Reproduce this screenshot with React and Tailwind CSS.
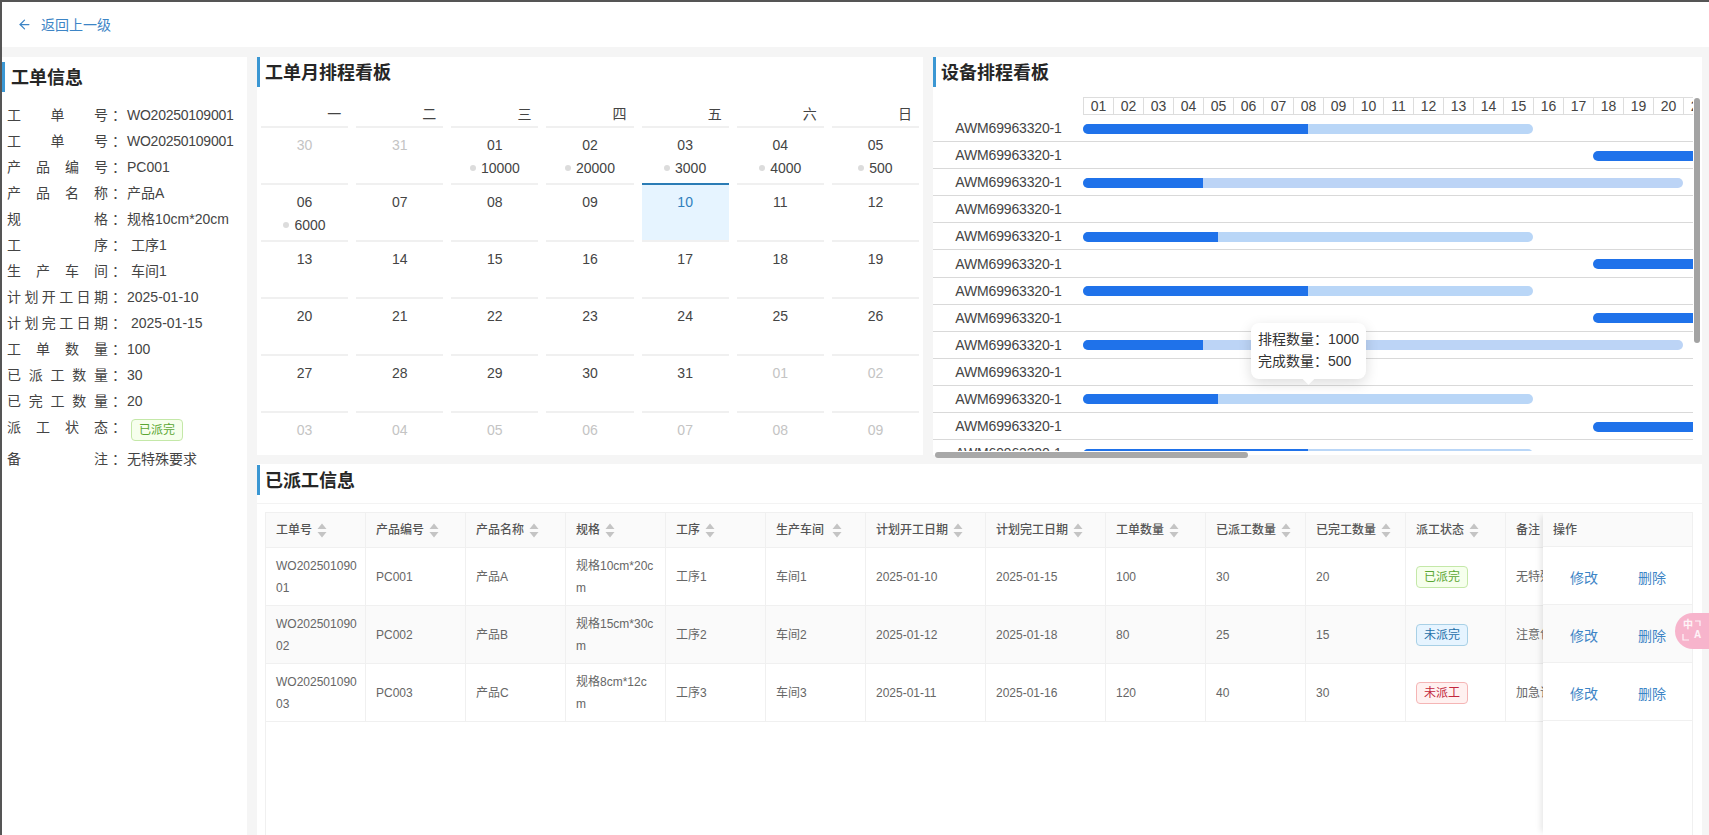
import React from 'react';
import { ArrowLeft } from 'lucide-react';

const FONT = "font-['Liberation_Sans','Noto_Sans_CJK_SC',sans-serif]";

const infoRows = [
  { label: '工单号', value: 'WO20250109001', tight: true },
  { label: '工单号', value: 'WO20250109001', tight: true },
  { label: '产品编号', value: 'PC001' },
  { label: '产品名称', value: '产品A' },
  { label: '规格', value: '规格10cm*20cm' },
  { label: '工序', value: '工序1', extra: true },
  { label: '生产车间', value: '车间1', extra: true },
  { label: '计划开工日期', value: '2025-01-10' },
  { label: '计划完工日期', value: '2025-01-15', extra: true },
  { label: '工单数量', value: '100' },
  { label: '已派工数量', value: '30' },
  { label: '已完工数量', value: '20' },
];

const weekdays = ['一', '二', '三', '四', '五', '六', '日'];

const calendar = [
  { d: '30', dim: true }, { d: '31', dim: true }, { d: '01', n: '10000' }, { d: '02', n: '20000' }, { d: '03', n: '3000' }, { d: '04', n: '4000' }, { d: '05', n: '500' },
  { d: '06', n: '6000' }, { d: '07' }, { d: '08' }, { d: '09' }, { d: '10', today: true }, { d: '11' }, { d: '12' },
  { d: '13' }, { d: '14' }, { d: '15' }, { d: '16' }, { d: '17' }, { d: '18' }, { d: '19' },
  { d: '20' }, { d: '21' }, { d: '22' }, { d: '23' }, { d: '24' }, { d: '25' }, { d: '26' },
  { d: '27' }, { d: '28' }, { d: '29' }, { d: '30' }, { d: '31' }, { d: '01', dim: true }, { d: '02', dim: true },
  { d: '03', dim: true }, { d: '04', dim: true }, { d: '05', dim: true }, { d: '06', dim: true }, { d: '07', dim: true }, { d: '08', dim: true }, { d: '09', dim: true },
];

const days = Array.from({ length: 21 }, (_, i) => String(i + 1).padStart(2, '0'));

const barA = { track: 'w-[450px] bg-[#b9d6f7]', done: 'w-[225px]' };
const barB = { track: 'ml-[510px] w-[300px] bg-[#1f72ea]', done: 'w-full' };
const barC = { track: 'w-[600px] bg-[#bcd4f6]', done: 'w-[120px]' };
const barE = { track: 'w-[450px] bg-[#b9d6f7]', done: 'w-[135px]' };
const ganttRows = [barA, barB, barC, null, barE, barB, barA, barB, barC, null, barE, barB, barA];

const columns = [
  { title: '工单号', w: 'w-[100px]' },
  { title: '产品编号', w: 'w-[100px]' },
  { title: '产品名称', w: 'w-[100px]' },
  { title: '规格', w: 'w-[100px]' },
  { title: '工序', w: 'w-[100px]' },
  { title: '生产车间', w: 'w-[100px]', wide: true },
  { title: '计划开工日期', w: 'w-[120px]' },
  { title: '计划完工日期', w: 'w-[120px]' },
  { title: '工单数量', w: 'w-[100px]' },
  { title: '已派工数量', w: 'w-[100px]' },
  { title: '已完工数量', w: 'w-[100px]' },
  { title: '派工状态', w: 'w-[100px]' },
  { title: '备注', w: 'w-[188px]', plain: true },
];

const tags = {
  done: { label: '已派完', tone: 'bg-[#f6ffed] border-[#c4e8a8] text-[#5aa632]' },
  partial: { label: '未派完', tone: 'bg-[#e6f4ff] border-[#a8d0e6] text-[#1f6fa8]' },
  none: { label: '未派工', tone: 'bg-[#fff1f0] border-[#f5b5b5] text-[#c2273d]' },
};

const orders = [
  ['WO202501090\n01', 'PC001', '产品A', '规格10cm*20c\nm', '工序1', '车间1', '2025-01-10', '2025-01-15', '100', '30', '20', 'done', '无特殊要求'],
  ['WO202501090\n02', 'PC002', '产品B', '规格15cm*30c\nm', '工序2', '车间2', '2025-01-12', '2025-01-18', '80', '25', '15', 'partial', '注意包装要求'],
  ['WO202501090\n03', 'PC003', '产品C', '规格8cm*12c\nm', '工序3', '车间3', '2025-01-11', '2025-01-16', '120', '40', '30', 'none', '加急订单处理'],
];

const Tag = ({ kind }) => (
  <span className={`inline-flex h-[22px] w-[52px] items-center justify-center rounded-[4px] border text-xs ${tags[kind].tone}`}>
    {tags[kind].label}
  </span>
);

const PanelTitle = ({ children, className = 'pl-[5px]' }) => (
  <h2 className={`flex h-[30px] items-center border-l-[3px] border-[#3b97d3] pt-[2px] text-lg font-bold leading-none text-[#262626] ${className}`}>
    {children}
  </h2>
);

const SortIcon = ({ wide }) => (
  <svg viewBox="0 0 10 15" className={`h-[15px] w-[10px] ${wide ? 'ml-2' : 'ml-[5px]'}`}>
    <path d="M5 0.5 L9.5 6 H0.5 Z M5 14.5 L9.5 9 H0.5 Z" fill="#c4c4c4" />
  </svg>
);

function InfoPanel() {
  return (
    <aside className="w-[245px] shrink-0 bg-white pt-[5px]">
      <PanelTitle className="pl-[6px]">工单信息</PanelTitle>
      <div className="mt-[10px] pl-[5px] text-sm text-[#444]">
        {infoRows.map((row, i) => (
          <div key={i} className="flex h-[26px] items-center">
            <span className="w-[101px] [text-align-last:justify]">{row.label}</span>
            <span className="ml-[4px] w-[15px]">：</span>
            <span className={`${row.extra ? 'ml-1' : ''} ${row.tight ? 'tracking-[-0.25px]' : ''}`}>{row.value}</span>
          </div>
        ))}
        <div className="flex h-[32px] items-start">
          <span className="w-[101px] leading-[26px] [text-align-last:justify]">派工状态</span>
          <span className="ml-[4px] w-[15px] leading-[26px]">：</span>
          <span className="ml-1 mt-[5px]"><Tag kind="done" /></span>
        </div>
        <div className="flex h-[26px] items-center">
          <span className="w-[101px] [text-align-last:justify]">备注</span>
          <span className="ml-[4px] w-[15px]">：</span>
          <span>无特殊要求</span>
        </div>
      </div>
    </aside>
  );
}

function CalendarPanel() {
  return (
    <section className="w-[666px] shrink-0 bg-white">
      <PanelTitle>工单月排程看板</PanelTitle>
      <div className="ml-[4px] grid w-[666px] grid-cols-7 pt-[14px] text-sm text-[#444]">
        {weekdays.map((w) => (
          <div key={w} className="mr-[8px] h-[25px] pr-[7px] text-right leading-[27px]">{w}</div>
        ))}
        {calendar.map((cell, i) => (
          <div
            key={i}
            className={`mr-[8px] h-[57px] border-t-2 text-center ${
              cell.today ? 'border-[#2b7cb5] bg-[#e6f4ff] text-[#2f7fbd]' : 'border-[#f0f0f0]'
            } ${cell.dim ? 'text-[#c4c4c4]' : ''}`}
          >
            <div className="pt-[5px] leading-[24px]">{cell.d}</div>
            {cell.n ? (
              <div className="flex items-center justify-center gap-[5px] leading-[22px]">
                <span className="h-[6px] w-[6px] rounded-full bg-[#dcdcdc]" />
                {cell.n}
              </div>
            ) : null}
          </div>
        ))}
      </div>
    </section>
  );
}

function GanttPanel() {
  return (
    <section className="relative flex-1 bg-white">
      <PanelTitle>设备排程看板</PanelTitle>
      <div className="relative mt-[10px] h-[354px] w-[760px] overflow-hidden text-sm text-[#444]">
        <div className="ml-[150px] flex h-[18px]">
          {days.map((d) => (
            <div key={d} className="h-[18px] w-[30px] shrink-0 border-y border-l border-[#ddd] text-center leading-[16px]">{d}</div>
          ))}
        </div>
        {ganttRows.map((row, i) => (
          <div key={i} className="flex h-[27.1px] items-center border-b border-[#d9d9d9]">
            <span className="w-[150px] shrink-0 pl-px text-center tracking-[-0.15px]">AWM69963320-1</span>
            {row ? (
              <div className={`mt-px h-[10px] shrink-0 overflow-hidden rounded-[5px] ${row.track}`}>
                <div className={`h-full bg-[#1f72ea] ${row.done}`} />
              </div>
            ) : null}
          </div>
        ))}
        <div className="absolute left-[318px] top-[226px] h-[56px] w-[115px] rounded-lg bg-white pl-[7px] pt-[5px] leading-[22px] text-[#333] shadow-[0_4px_14px_rgba(0,0,0,0.14)]">
          <p>排程数量：1000</p>
          <p>完成数量：500</p>
          <span className="absolute -bottom-[4px] left-[53px] h-[9px] w-[9px] rotate-45 bg-white" />
        </div>
      </div>
      <div className="absolute right-[2px] top-[41px] h-[245px] w-[6px] rounded-full bg-[#a3a3a3]" />
      <div className="absolute -bottom-[3px] left-[2px] h-[6px] w-[313px] rounded-full bg-[#a8a8a8]" />
    </section>
  );
}

function OrderTable() {
  return (
    <section className="relative flex-1 overflow-hidden bg-white">
      <PanelTitle className="mt-px pl-[5px]">已派工信息</PanelTitle>
      <div className="mt-[8px] h-px w-full bg-[#f3f3f3]" />
      <div className="relative ml-[8px] mt-[8px] h-[323px] w-[1428px] overflow-hidden border-r border-t border-[#f0f0f0] text-xs text-[#666] shadow-[inset_1px_0_0_#f0f0f0]">
        <table className="w-[1428px] table-fixed border-collapse">
          <thead>
            <tr className="h-[34px] bg-[#fafafa] text-[#555]">
              {columns.map((c) => (
                <th key={c.title} className={`${c.w} border-b border-r border-[#f0f0f0] pl-[10px] pt-px text-left font-medium first:border-l`}>
                  <div className="flex items-center whitespace-nowrap">
                    {c.title}
                    {c.plain ? null : <SortIcon wide={c.wide} />}
                  </div>
                </th>
              ))}
            </tr>
          </thead>
          <tbody>
            {orders.map((order, i) => (
              <tr key={order[0]} className={`h-[58px] ${i === 1 ? 'bg-[#fafafa]' : ''}`}>
                {order.map((value, j) => (
                  <td key={j} className="overflow-hidden whitespace-pre-line border-b border-r border-[#f0f0f0] pl-[10px] pt-[2px] leading-[22px] first:border-l">
                    {j === 11 ? <Tag kind={value} /> : value}
                  </td>
                ))}
              </tr>
            ))}
          </tbody>
        </table>
        <div className="absolute bottom-0 right-0 top-0 w-[149px] bg-white shadow-[-5px_0_6px_-3px_rgba(0,0,0,0.1)]">
          <div className="flex h-[34px] items-center border-b border-[#f0f0f0] bg-[#fafafa] pl-[10px] pt-px font-medium text-[#555]">操作</div>
          {orders.map((order, i) => (
            <div key={order[0]} className={`flex h-[58px] items-center gap-[40px] border-b border-[#f0f0f0] pl-[27px] pt-1 text-sm text-[#3d85c6] ${i === 1 ? 'bg-[#fafafa]' : ''}`}>
              <span>修改</span>
              <span>删除</span>
            </div>
          ))}
        </div>
      </div>
    </section>
  );
}

// pink floating translate button on the right edge
function TranslateBubble() {
  return (
    <div className="absolute left-[1675px] top-[613px] h-[36px] w-[34px] rounded-l-[18px] bg-[#f7b4cc] text-[10px] font-bold leading-none text-white/85">
      <span className="absolute left-[8px] top-[7px]">中</span>
      <span className="absolute left-[19px] top-[17px]">A</span>
      <svg viewBox="0 0 34 36" className="absolute inset-0 h-full w-full" fill="none" stroke="currentColor" strokeWidth="1.2">
        <path d="M20 8 H25 V13" />
        <path d="M8 21 V27 H14" />
      </svg>
    </div>
  );
}

export default function App() {
  return (
    <div className={`${FONT} h-[835px] w-[1709px] overflow-hidden border-l-2 border-t-2 border-[#555] bg-[#f5f5f5]`}>
      <header className="flex h-[45px] items-center gap-[9px] bg-white pl-[15px] text-sm text-[#3d85c6]">
        <ArrowLeft className="h-[15px] w-[15px]" />
        <span>返回上一级</span>
      </header>
      <div className="mt-[10px] flex h-[778px] gap-[10px]">
        <InfoPanel />
        <div className="flex w-[1445px] flex-col gap-[9px]">
          <div className="flex h-[398px] gap-[10px]">
            <CalendarPanel />
            <GanttPanel />
          </div>
          <OrderTable />
        </div>
      </div>
      <TranslateBubble />
    </div>
  );
}
